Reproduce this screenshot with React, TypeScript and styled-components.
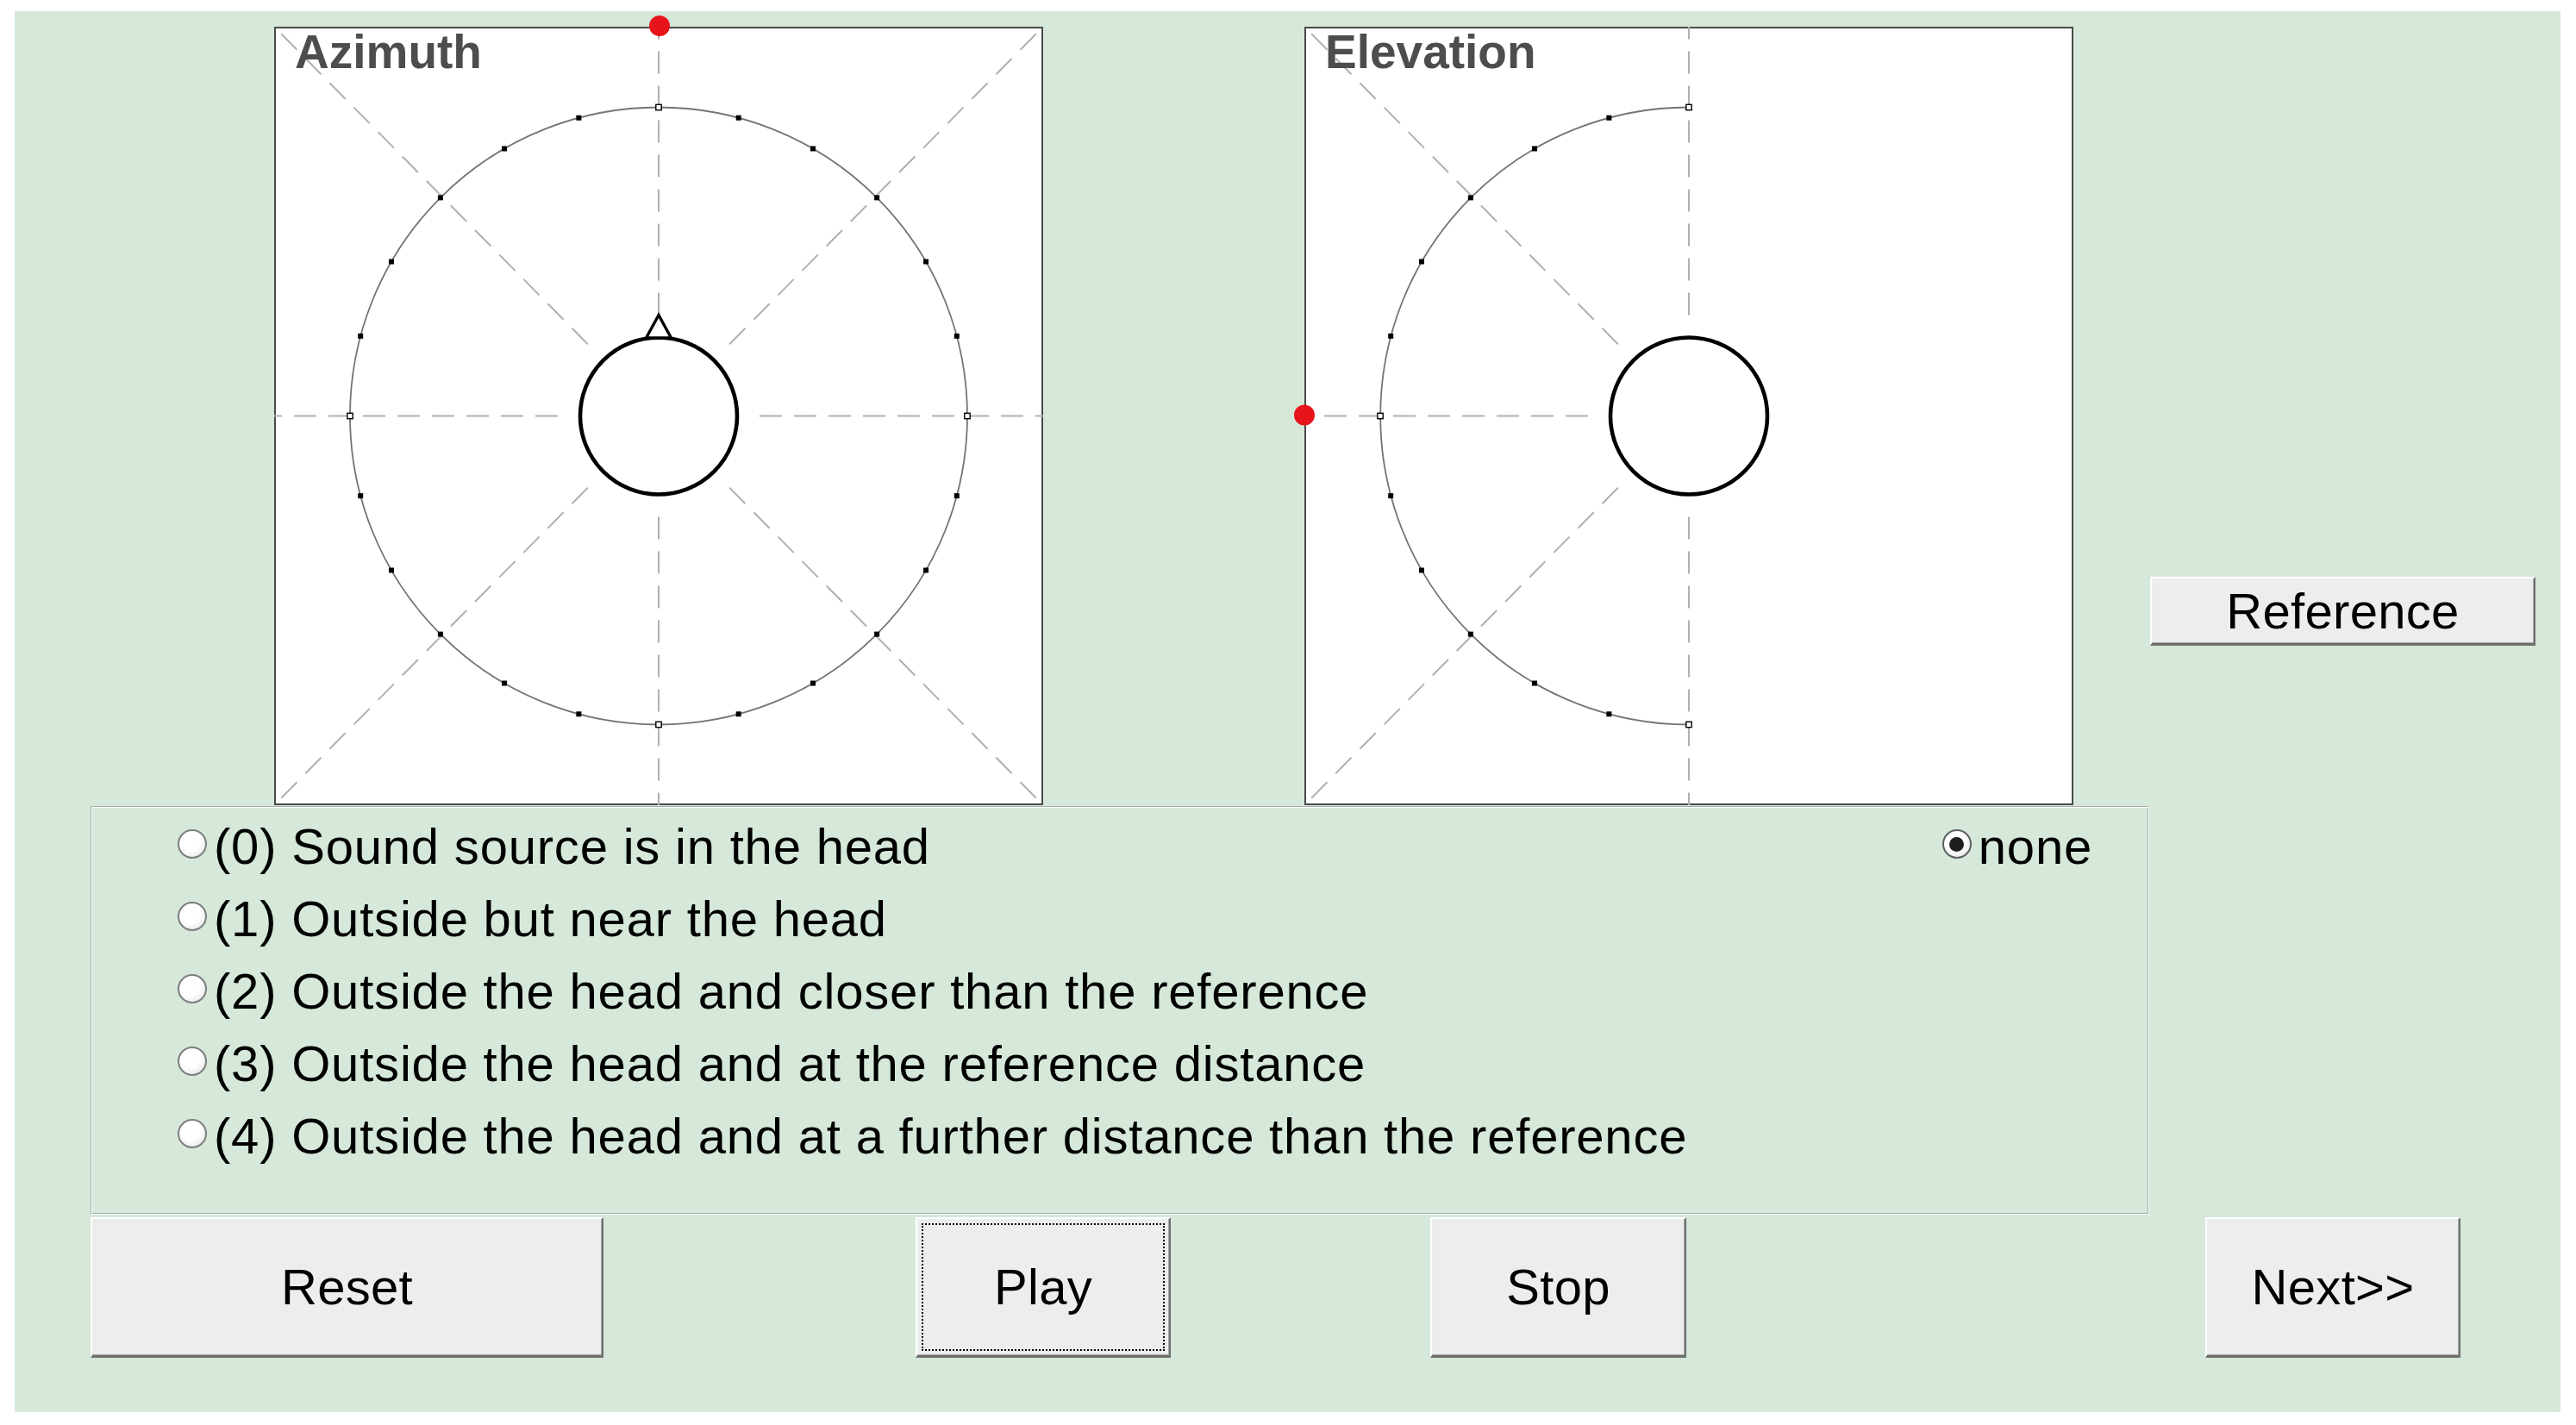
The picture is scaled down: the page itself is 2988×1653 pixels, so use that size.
import React from 'react';
import styled, { createGlobalStyle, css } from 'styled-components';

const Global = createGlobalStyle`
  html, body { margin: 0; padding: 0; background: #ffffff; }
  body { font-family: "Liberation Sans", Arial, sans-serif; }
`;

const Page = styled.div`
  width: 2988px;
  height: 1653px;
  padding: 13px 0 0 17px;
  box-sizing: border-box;
  background: #ffffff;
`;

const Panel = styled.div`
  width: 2953px;
  height: 1625px;
  background: #d5e8d9;
  padding-top: 18px;
  box-sizing: border-box;
  display: flex;
  flex-direction: column;
`;

const TopRow = styled.div`
  display: flex;
  align-items: flex-start;
  padding-left: 301px;
  height: 903px;
`;

const PlotBox = styled.div<{ $gap?: number }>`
  position: relative;
  flex: none;
  width: 892px;
  height: 903px;
  box-sizing: border-box;
  background: #ffffff;
  border: 2px solid #4a4a4a;
  margin-left: ${(p) => p.$gap ?? 0}px;
`;

const PlotSvg = styled.svg`
  position: absolute;
  left: -2px;
  top: -2px;
  width: 892px;
  height: 903px;
  overflow: visible;
`;

const PlotTitle = styled.div`
  position: absolute;
  left: 22px;
  top: 0px;
  font: bold 55px/54px "Liberation Sans", Arial, sans-serif;
  color: #4d4d4d;
`;

const PushButton = styled.button<{ $w: number; $h: number; $ml?: number; $mt?: number; $focused?: boolean }>`
  position: relative;
  flex: none;
  box-sizing: border-box;
  width: ${(p) => p.$w}px;
  height: ${(p) => p.$h}px;
  margin-left: ${(p) => p.$ml ?? 0}px;
  margin-top: ${(p) => p.$mt ?? 0}px;
  padding: 0;
  background: #ededed;
  color: #000000;
  font: 58px/1 "Liberation Sans", Arial, sans-serif;
  letter-spacing: 0.3px;
  border-style: solid;
  border-width: 2px 2px 3px 2px;
  border-color: #ffffff #6f6f6f #6f6f6f #ffffff;
  box-shadow: inset -1px -1px 0 #a8a8a8;
  cursor: default;
  ${(p) =>
    p.$focused &&
    css`
      &::after {
        content: '';
        position: absolute;
        inset: 5px;
        border: 2px dotted #000000;
      }
    `}
`;

const RadioGroup = styled.div`
  margin: 1px 0 0 88px;
  width: 2388px;
  height: 474px;
  box-sizing: border-box;
  border: 1px solid;
  border-color: #a3aca5 #ffffff #ffffff #a3aca5;
  box-shadow: inset 1px 1px 0 #ffffff, inset -1px -1px 0 #a3aca5;
  display: flex;
  justify-content: space-between;
  align-items: flex-start;
  padding: 1px 65px 0 100px;
`;

const RadioList = styled.div`
  display: flex;
  flex-direction: column;
`;

const RadioRow = styled.label`
  display: flex;
  align-items: center;
  gap: 8px;
  height: 84px;
  font: 58px/1 "Liberation Sans", Arial, sans-serif;
  letter-spacing: 0.8px;
  color: #000000;
  white-space: nowrap;
`;

const RadioText = styled.span`
  padding-top: 6px;
`;

const RadioDot = styled.span<{ $on?: boolean }>`
  position: relative;
  flex: none;
  width: 34px;
  height: 34px;
  box-sizing: border-box;
  border-radius: 50%;
  border: ${(p) => (p.$on ? '2.5px solid #5e5e5e' : '2px solid #7e7e7e')};
  background: radial-gradient(circle at 40% 35%, #ffffff 45%, #dedede 100%);
  ${(p) =>
    p.$on &&
    css`
      &::after {
        content: '';
        position: absolute;
        left: 50%;
        top: 50%;
        width: 17px;
        height: 17px;
        margin: -8.5px 0 0 -8.5px;
        border-radius: 50%;
        background: #1e1e1e;
      }
    `}
`;

const ButtonRow = styled.div`
  display: flex;
  margin: 3px 0 0 88px;
  height: 163px;
`;

const W = 892;
const H = 903;
const CX = 446;
const CY = 451.5;
const R = 358;
const HEAD = 91;
const GAP = 117;

type Kind = 'azimuth' | 'elevation';

function ray(x: number, y: number) {
  const dx = x - CX;
  const dy = y - CY;
  const d = Math.hypot(dx, dy);
  return { x1: CX + (dx * GAP) / d, y1: CY + (dy * GAP) / d, x2: x, y2: y };
}

function PlotDrawing({ kind }: { kind: Kind }) {
  const targets: [number, number][] =
    kind === 'azimuth'
      ? [
          [0, 0],
          [W, 0],
          [0, H],
          [W, H],
          [CX, 0],
          [CX, H],
          [0, CY],
          [W, CY],
        ]
      : [
          [0, 0],
          [0, H],
          [CX, 0],
          [CX, H],
          [0, CY],
        ];
  const angles: number[] = [];
  if (kind === 'azimuth') {
    for (let a = 0; a < 360; a += 15) angles.push(a);
  } else {
    for (let a = 180; a <= 360; a += 15) angles.push(a);
  }
  return (
    <PlotSvg viewBox={`0 0 ${W} ${H}`}>
      {targets.map(([x, y], i) => {
        const r = ray(x, y);
        return (
          <line
            key={i}
            x1={r.x1}
            y1={r.y1}
            x2={r.x2}
            y2={r.y2}
            stroke="#b0b0b0"
            strokeWidth={2}
            strokeDasharray="26 14"
          />
        );
      })}
      {kind === 'azimuth' ? (
        <circle cx={CX} cy={CY} r={R} fill="none" stroke="#747474" strokeWidth={1.8} />
      ) : (
        <path
          d={`M ${CX} ${CY - R} A ${R} ${R} 0 0 0 ${CX} ${CY + R}`}
          fill="none"
          stroke="#747474"
          strokeWidth={1.8}
        />
      )}
      {angles.map((a) => {
        const t = (a * Math.PI) / 180;
        const x = CX + R * Math.sin(t);
        const y = CY - R * Math.cos(t);
        const hollow = a % 90 === 0;
        return hollow ? (
          <rect key={a} x={x - 3.2} y={y - 3.2} width={6.4} height={6.4} fill="#ffffff" stroke="#000000" strokeWidth={1.4} />
        ) : (
          <rect key={a} x={x - 3} y={y - 3} width={6} height={6} fill="#000000" />
        );
      })}
      <circle cx={CX} cy={CY} r={HEAD} fill="#ffffff" stroke="#000000" strokeWidth={4.6} />
      {kind === 'azimuth' && (
        <polygon
          points={`${CX},${CY - GAP} ${CX - 14.5},${CY - HEAD + 0.5} ${CX + 14.5},${CY - HEAD + 0.5}`}
          fill="#ffffff"
          stroke="#000000"
          strokeWidth={3.4}
          strokeLinejoin="miter"
        />
      )}
      {kind === 'azimuth' ? (
        <circle cx={CX + 1} cy={-1} r={12} fill="#e8141c" />
      ) : (
        <circle cx={0} cy={CY - 1} r={12} fill="#e8141c" />
      )}
    </PlotSvg>
  );
}

function Plot({ kind, title, gap }: { kind: Kind; title: string; gap?: number }) {
  return (
    <PlotBox $gap={gap}>
      <PlotDrawing kind={kind} />
      <PlotTitle>{title}</PlotTitle>
    </PlotBox>
  );
}

const options = [
  '(0) Sound source is in the head',
  '(1) Outside but near the head',
  '(2) Outside the head and closer than the reference',
  '(3) Outside the head and at the reference distance',
  '(4) Outside the head and at a further distance than the reference',
];

export default function App() {
  return (
    <>
      <Global />
      <Page>
        <Panel>
          <TopRow>
            <Plot kind="azimuth" title="Azimuth" />
            <Plot kind="elevation" title="Elevation" gap={303} />
            <PushButton $w={447} $h={80} $ml={89} $mt={638}>
              Reference
            </PushButton>
          </TopRow>
          <RadioGroup>
            <RadioList>
              {options.map((o) => (
                <RadioRow key={o}>
                  <RadioDot />
                  <RadioText>{o}</RadioText>
                </RadioRow>
              ))}
            </RadioList>
            <RadioRow>
              <RadioDot $on />
              <RadioText>none</RadioText>
            </RadioRow>
          </RadioGroup>
          <ButtonRow>
            <PushButton $w={595} $h={163}>
              Reset
            </PushButton>
            <PushButton $w={296} $h={163} $ml={362} $focused>
              Play
            </PushButton>
            <PushButton $w={297} $h={163} $ml={301}>
              Stop
            </PushButton>
            <PushButton $w={296} $h={163} $ml={602}>
              Next&gt;&gt;
            </PushButton>
          </ButtonRow>
        </Panel>
      </Page>
    </>
  );
}
